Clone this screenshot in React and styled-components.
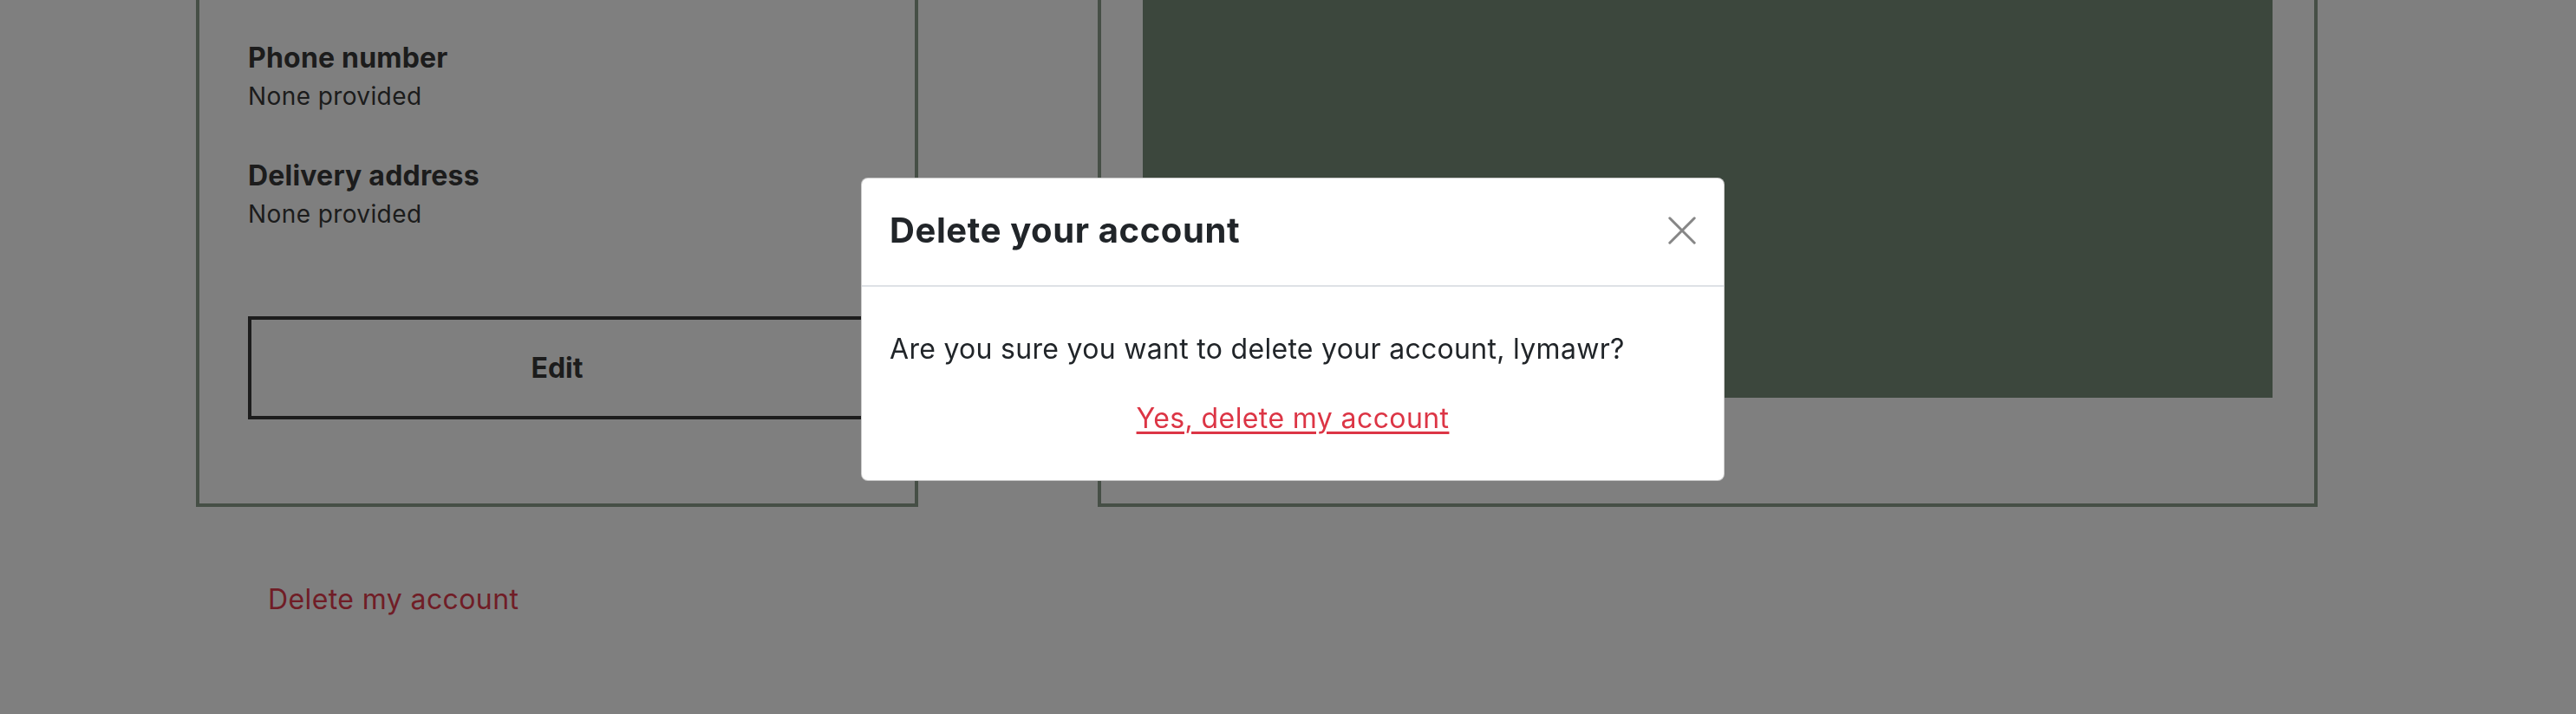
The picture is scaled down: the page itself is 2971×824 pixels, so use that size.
import styled, { createGlobalStyle } from 'styled-components'

const GlobalStyle = createGlobalStyle`
  html, body {
    margin: 0;
    padding: 0;
    background: #ffffff;
    font-family: Inter, "Liberation Sans", sans-serif;
    overflow: hidden;
  }
`

const Page = styled.div`
  width: 2971px;
  height: 824px;
  box-sizing: border-box;
  padding-left: 226px;
  display: flex;
  flex-direction: column;
  align-items: flex-start;
`

const Columns = styled.div`
  display: flex;
  align-items: stretch;
  gap: 207px;
`

const Card = styled.section`
  box-sizing: border-box;
  width: ${props => props.$width}px;
  border: 4px solid #8c9f8c;
  border-top: none;
  padding: ${props => props.$padding};
  display: flex;
  flex-direction: column;
`

const Field = styled.div`
  display: flex;
  flex-direction: column;
  & + & {
    margin-top: 48px;
  }
`

const Label = styled.span`
  font-size: 32px;
  line-height: 42px;
  font-weight: 650;
  letter-spacing: 0.2px;
  color: #383838;
`

const Value = styled.span`
  font-size: 28px;
  line-height: 46px;
  letter-spacing: 0.4px;
  color: #383838;
`

const OutlineButton = styled.button`
  margin-top: 95px;
  height: 119px;
  box-sizing: border-box;
  border: 4px solid #383838;
  background: transparent;
  font-family: inherit;
  font-size: 32px;
  font-weight: 650;
  color: #383838;
`

const Picture = styled.div`
  width: 1303px;
  height: 459px;
  background: #788e7a;
`

const TextLink = styled.a`
  margin: 83px 0 0 83px;
  font-size: 32px;
  line-height: 48px;
  letter-spacing: 0.4px;
  color: #e03a4c;
  text-decoration: none;
`

const Overlay = styled.div`
  position: fixed;
  inset: 0;
  background: rgba(0, 0, 0, 0.5);
  display: flex;
  justify-content: center;
  align-items: flex-start;
  padding: 205px 0 0 11px;
  box-sizing: border-box;
`

const Modal = styled.div`
  width: 996px;
  box-sizing: border-box;
  background: #ffffff;
  border: 1px solid rgba(0, 0, 0, 0.2);
  border-radius: 8px;
  color: #212529;
`

const ModalHeader = styled.div`
  display: flex;
  align-items: center;
  justify-content: space-between;
  padding: 30px 32px 33px;
  border-bottom: 2px solid #dee2e6;
`

const ModalTitle = styled.h2`
  margin: 0;
  font-size: 40px;
  line-height: 60px;
  font-weight: 700;
  letter-spacing: 0.6px;
`

const CloseButton = styled.button`
  border: 0;
  padding: 0;
  background: transparent;
  width: 32px;
  height: 32px;
  display: flex;
  color: #000;
  opacity: 0.47;
`

const ModalBody = styled.div`
  padding: 48px 32px 47px;
  display: flex;
  flex-direction: column;
`

const Message = styled.p`
  margin: 0;
  font-size: 32px;
  line-height: 48px;
  letter-spacing: 0.3px;
`

const DangerLink = styled.a`
  margin-top: 32px;
  align-self: center;
  font-size: 32px;
  line-height: 48px;
  letter-spacing: 0.4px;
  color: #dc3545;
  text-decoration: underline;
  text-decoration-thickness: 3px;
  text-underline-offset: 4px;
`

const App = () => {
  return (
    <>
      <GlobalStyle />
      <Page>
        <Columns>
          <Card $width={833} $padding="46px 56px 97px 56px">
            <Field>
              <Label>Phone number</Label>
              <Value>None provided</Value>
            </Field>
            <Field>
              <Label>Delivery address</Label>
              <Value>None provided</Value>
            </Field>
            <OutlineButton>Edit</OutlineButton>
          </Card>
          <Card $width={1407} $padding="0 48px 121px 48px">
            <Picture />
          </Card>
        </Columns>
        <TextLink href="#">Delete my account</TextLink>
      </Page>

      <Overlay>
        <Modal>
          <ModalHeader>
            <ModalTitle>Delete your account</ModalTitle>
            <CloseButton aria-label="Close">
              <svg width="32" height="32" viewBox="0 0 32 32">
                <path d="M1.8 1.8 L30.2 30.2 M30.2 1.8 L1.8 30.2" stroke="currentColor" strokeWidth="3" strokeLinecap="round" />
              </svg>
            </CloseButton>
          </ModalHeader>
          <ModalBody>
            <Message>Are you sure you want to delete your account, lymawr?</Message>
            <DangerLink href="#">Yes, delete my account</DangerLink>
          </ModalBody>
        </Modal>
      </Overlay>
    </>
  )
}

export default App
